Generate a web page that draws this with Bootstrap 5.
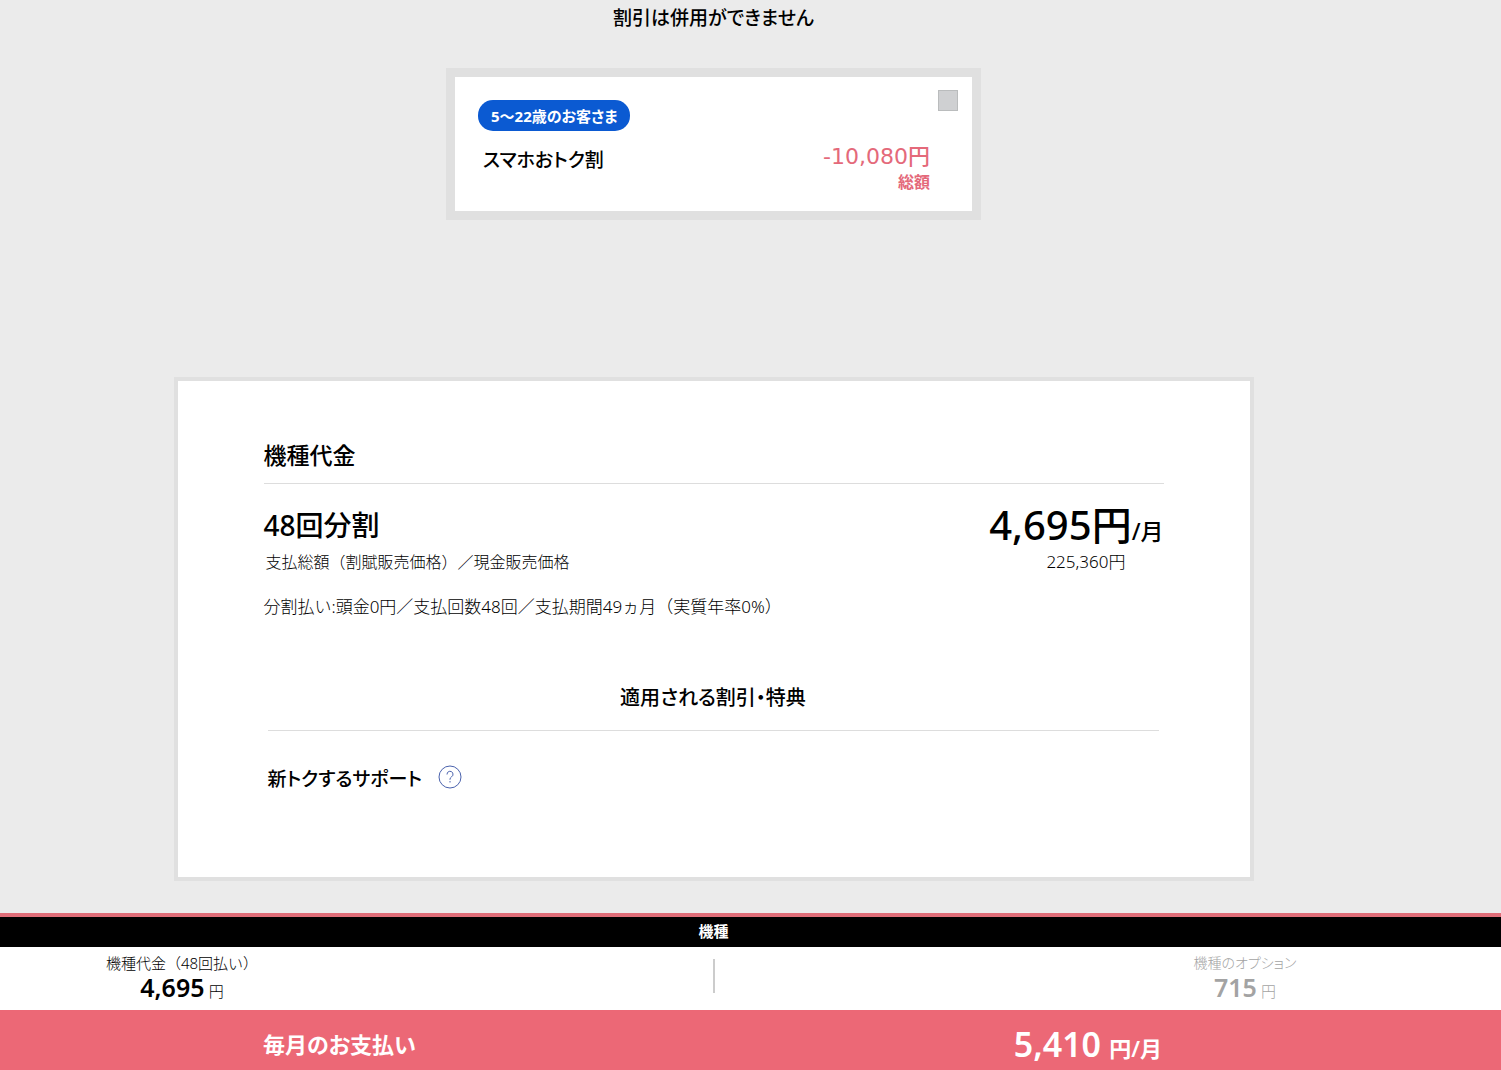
<!DOCTYPE html>
<html lang="ja">
<head>
<meta charset="utf-8">
<meta name="viewport" content="width=device-width, initial-scale=1">
<title>毎月のお支払い</title>
<link href="https://cdn.jsdelivr.net/npm/bootstrap@5.3.0/dist/css/bootstrap.min.css" rel="stylesheet">
<style>
body { background: #ebebeb; color: #000; font-family: "Noto Sans", "Noto Sans CJK JP", sans-serif; font-size: 16px; line-height: 24px; }
h1, h2, h3, p, dl, dd, dt { margin: 0; font-weight: inherit; line-height: inherit; font-size: inherit; }
.gutter-end { padding-right: 74px; }
.kana { font-feature-settings: "palt"; }
.fw-mid { font-weight: 500; }
.t-14 { font-size: 14px; }
.t-15 { font-size: 15px; }
.t-17 { font-size: 17px; }
.t-19 { font-size: 19px; }
.t-20 { font-size: 20px; }
.t-22 { font-size: 22px; }
.t-23 { font-size: 23px; }
.t-25 { font-size: 25px; }
.t-28 { font-size: 28px; }
.t-34 { font-size: 34px; }
.t-40 { font-size: 40px; }
.notice { padding-top: 6px; margin-bottom: 38px; }
.offer { width: 100%; max-width: 535px; border: 9px solid #e0e0e0; background: #fff; padding: 13px 14px 17px 23px; margin-bottom: 157px; }
.pill { background: #0b5ad2; color: #fff; border-radius: 15px; padding: 4px 12px 3px 13px; margin-top: 10px; }
.offer-check { appearance: none; width: 20px; height: 21px; margin: 0; background: #cfd0d2; border: 1px solid #babcbd; border-radius: 0; }
.offer-row { padding: 13px 28px 0 5px; }
.offer-price { font-family: "DejaVu Sans", "Noto Sans CJK JP", sans-serif; line-height: 26px; }
.rose { color: #e4697a; }
.plan { width: 100%; max-width: 1080px; border: 4px solid #e0e0e0; background: #fff; padding: 59px 86px 86px; margin-bottom: 32px; }
.plan-title { padding-bottom: 13px; border-bottom: 1px solid #ddd; line-height: 30px; }
.plan-main { padding-top: 25px; line-height: 32px; }
.plan-total { padding: 0 38px 0 2px; }
.plan-note { padding-top: 21px; }
.plan-benefit { padding: 0 5px 0 4px; margin-top: 67px; }
.benefit-title { padding-bottom: 20px; border-bottom: 1px solid #ddd; }
.benefit-row { padding-top: 32px; }
.help { width: 24px; height: 24px; background: none; border: 0; padding: 0; line-height: 0; }
.bar-top { border-top: 4px solid #df6d78; background: #000; color: #fff; line-height: 28px; padding-bottom: 2px; }
.bar-items { background: #fff; padding-top: 4px; padding-bottom: 7px; }
.bar-item { flex: 0 0 364px; }
.rule { width: 2px; height: 34px; background: #ccc; margin-top: 8px; }
.dimmed { color: #a3a3a3; }
.bar-total { background: #ec6876; color: #fff; line-height: 44px; padding: 12px 339px 0 263px; }
</style>
</head>
<body>
<main class="gutter-end d-flex flex-column align-items-center">
  <h1 class="notice kana t-19 fw-mid">割引は併用ができません</h1>
  <section class="offer">
    <div class="d-flex justify-content-between align-items-start">
      <span class="pill kana t-15 fw-bold">5～22歳のお客さま</span>
      <input class="offer-check" type="checkbox" id="offer" aria-labelledby="offer-name">
    </div>
    <div class="offer-row d-flex justify-content-between">
      <label class="kana t-19 fw-mid pt-1" for="offer" id="offer-name">スマホおトク割</label>
      <div class="rose text-end">
        <p class="offer-price t-22 fw-mid">-10,080円</p>
        <p class="fw-bold">総額</p>
      </div>
    </div>
  </section>
  <section class="plan">
    <h2 class="plan-title t-23 fw-mid">機種代金</h2>
    <div class="plan-main d-flex justify-content-between align-items-start fw-mid">
      <h3 class="t-28">48回分割</h3>
      <p><span class="t-40">4,695円</span><span class="t-23">/月</span></p>
    </div>
    <div class="plan-total d-flex justify-content-between fw-light">
      <span>支払総額（割賦販売価格）／現金販売価格</span>
      <span class="t-17">225,360円</span>
    </div>
    <p class="plan-note t-17 fw-light">分割払い:頭金0円／支払回数48回／支払期間49ヵ月（実質年率0%）</p>
    <div class="plan-benefit">
      <h3 class="benefit-title kana t-20 fw-mid text-center">適用される割引・特典</h3>
      <div class="benefit-row d-flex align-items-center gap-3">
        <span class="kana t-19 fw-mid pt-1">新トクするサポート</span>
        <button class="help" type="button" aria-label="ヘルプ">
          <svg width="24" height="24" viewBox="0 0 24 24" fill="none" stroke="#4a62ad" stroke-width="1"><circle cx="12" cy="12" r="11"/><path d="M9 9.500a3 3 0 1 1 4.600 2.300q-1.600 1-1.600 2.400v.6M12 16v1.500"/></svg>
        </button>
      </div>
    </div>
  </section>
</main>
<footer>
  <div class="bar-top gutter-end text-center t-15 fw-bold">機種</div>
  <div class="bar-items gutter-end d-flex justify-content-between">
    <dl class="bar-item text-center">
      <dt class="t-15 fw-light">機種代金（48回払い）</dt>
      <dd><span class="t-25 fw-semibold">4,695</span> <span class="t-15 fw-light">円</span></dd>
    </dl>
    <div class="rule"></div>
    <dl class="bar-item text-center dimmed">
      <dt class="kana t-14 fw-light">機種のオプション</dt>
      <dd><span class="t-25 fw-semibold">715</span> <span class="t-15 fw-light">円</span></dd>
    </dl>
  </div>
  <dl class="bar-total d-flex justify-content-between align-items-start fw-semibold">
    <dt class="kana t-22">毎月のお支払い</dt>
    <dd><span class="t-34 me-1">5,410</span> <span class="t-22">円/月</span></dd>
  </dl>
</footer>
<script src="https://cdn.jsdelivr.net/npm/bootstrap@5.3.0/dist/js/bootstrap.bundle.min.js"></script>
</body>
</html>
